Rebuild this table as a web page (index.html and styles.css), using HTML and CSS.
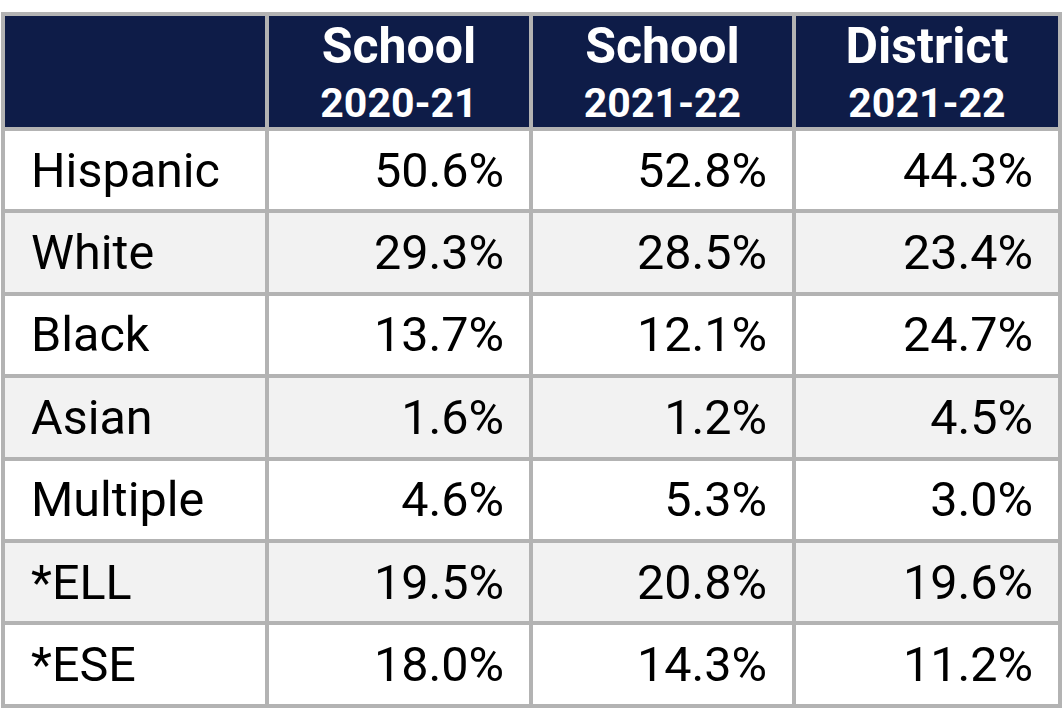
FILE: index.html
```html
<!DOCTYPE html>
<html>
<head>
<meta charset="utf-8">
<link rel="stylesheet" href="styles.css">
</head>
<body>
<div class="page">
  <div class="table">
    <div class="hcell"></div>
    <div class="hcell"><span class="h1">School</span><span class="h2">2020-21</span></div>
    <div class="hcell"><span class="h1">School</span><span class="h2">2021-22</span></div>
    <div class="hcell"><span class="h1">District</span><span class="h2">2021-22</span></div>

    <div class="cell label">Hispanic</div><div class="cell num">50.6%</div><div class="cell num">52.8%</div><div class="cell num">44.3%</div>
    <div class="cell label alt">White</div><div class="cell num alt">29.3%</div><div class="cell num alt">28.5%</div><div class="cell num alt">23.4%</div>
    <div class="cell label">Black</div><div class="cell num">13.7%</div><div class="cell num">12.1%</div><div class="cell num">24.7%</div>
    <div class="cell label alt">Asian</div><div class="cell num alt">1.6%</div><div class="cell num alt">1.2%</div><div class="cell num alt">4.5%</div>
    <div class="cell label">Multiple</div><div class="cell num">4.6%</div><div class="cell num">5.3%</div><div class="cell num">3.0%</div>
    <div class="cell label alt">*ELL</div><div class="cell num alt">19.5%</div><div class="cell num alt">20.8%</div><div class="cell num alt">19.6%</div>
    <div class="cell label">*ESE</div><div class="cell num">18.0%</div><div class="cell num">14.3%</div><div class="cell num">11.2%</div>
  </div>
</div>
</body>
</html>
```
FILE: styles.css
```css
html, body {
  margin: 0;
  padding: 0;
  background: #ffffff;
}
.page {
  padding: 12px 0 0 1px;
}
.table {
  display: grid;
  width: max-content;
  grid-template-columns: 260px 260px 259px 262px;
  grid-template-rows: 111px repeat(7, 78.4px);
  gap: 4px;
  padding: 4px;
  background: #b3b3b3;
  font-family: Roboto, "Liberation Sans", sans-serif;
}
.hcell {
  background: #0e1c48;
  color: #ffffff;
  font-weight: bold;
  display: flex;
  flex-direction: column;
  align-items: center;
  justify-content: flex-start;
  padding-top: 3px;
  overflow: hidden;
}
.h1 {
  font-size: 50px;
  line-height: 55px;
}
.h2 {
  font-size: 41px;
  line-height: 44px;
  margin-top: 7px;
}
.cell {
  background: #ffffff;
  color: #000000;
  font-size: 48.5px;
  display: flex;
  align-items: center;
}
.cell.alt {
  background: #f2f2f2;
}
.label {
  padding-left: 26px;
}
.num {
  justify-content: flex-end;
  padding-right: 25px;
}
```
